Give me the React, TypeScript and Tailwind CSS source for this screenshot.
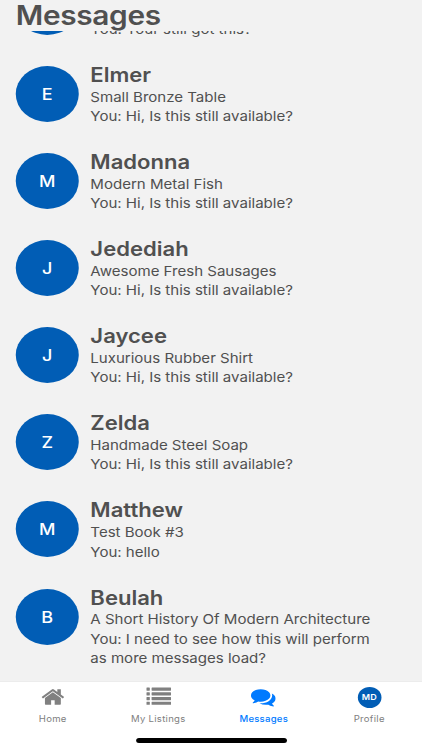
import React from 'react';

interface Conversation {
  name: string;
  listing: string;
  message: string;
}

const conversations: Conversation[] = [
  { name: 'Elmer', listing: 'Small Bronze Table', message: 'You: Hi, Is this still available?' },
  { name: 'Madonna', listing: 'Modern Metal Fish', message: 'You: Hi, Is this still available?' },
  { name: 'Jedediah', listing: 'Awesome Fresh Sausages', message: 'You: Hi, Is this still available?' },
  { name: 'Jaycee', listing: 'Luxurious Rubber Shirt', message: 'You: Hi, Is this still available?' },
  { name: 'Zelda', listing: 'Handmade Steel Soap', message: 'You: Hi, Is this still available?' },
  { name: 'Matthew', listing: 'Test Book #3', message: 'You: hello' },
  {
    name: 'Beulah',
    listing: 'A Short History Of Modern Architecture',
    message: 'You: I need to see how this will perform as more messages load?',
  },
];

function HomeIcon() {
  return (
    <svg className="w-[22px] h-[22px]" viewBox="0 0 1792 1792" fill="currentColor">
      <path d="M1472 992v480q0 26-19 45t-45 19h-384v-384h-256v384h-384q-26 0-45-19t-19-45v-480q0-1 .5-3t.5-3l575-474 575 474q1 2 1 6zm223-69l-62 74q-8 9-21 11h-3q-13 0-21-7l-692-577-692 577q-12 8-24 7-13-2-21-11l-62-74q-8-10-7-23.5t11-21.5l719-599q32-26 76-26t76 26l244 204v-195q0-14 9-23t23-9h192q14 0 23 9t9 23v408l219 182q10 8 11 21.5t-7 23.5z" />
    </svg>
  );
}

function ListIcon() {
  return (
    <svg className="w-[22px] h-[22px]" viewBox="0 0 1792 1792" fill="currentColor">
      {[128, 512, 896, 1280].map((y) => (
        <g key={y}>
          <rect x="0" y={y} width="256" height="256" rx="32" />
          <rect x="384" y={y} width="1408" height="256" rx="32" />
        </g>
      ))}
    </svg>
  );
}

function CommentsIcon() {
  return (
    <svg className="w-[22px] h-[22px]" viewBox="0 0 1792 1792" fill="currentColor">
      <path d="M1408 768q0 139-94 257t-256.5 186.5-353.5 68.5q-86 0-176-16-124 88-278 128-36 9-86 16h-3q-11 0-20.5-8t-11.5-21q-1-3-1-6.5t.5-6.5 2-6l2.5-5 3.5-5.5 4-5 4.5-5 4-4.5q5-6 23-25t26-29.5 22.5-29 25-38.5 20.5-44q-124-72-195-177t-71-224q0-139 94-257t256.5-186.5 353.5-68.5 353.5 68.5 256.5 186.5 94 257zm384 256q0 120-71 224.5t-195 176.5q10 24 20.5 44t25 38.5 22.5 29 26 29.5 23 25q1 1 4 4.5t4.5 5 4 5 3.5 5.5l2.5 5 2 6 .5 6.5-1 6.5q-3 14-13 22t-22 7q-50-7-86-16-154-40-278-128-90 16-176 16-271 0-472-132 58 4 88 4 161 0 309-45t264-129q125-92 192-212t67-254q0-77-23-152 129 71 204 178t75 230z" />
    </svg>
  );
}

function Avatar({ letter }: { letter?: string }) {
  return (
    <div className="w-14 h-14 shrink-0 rounded-full bg-[#015db5] text-white flex items-center justify-center text-base font-medium">
      {letter}
    </div>
  );
}

function Tab({ label, active, children }: { label: string; active?: boolean; children: React.ReactNode }) {
  return (
    <div className={`flex-1 flex flex-col items-center ${active ? 'text-[#007aff]' : 'text-[#808080]'}`}>
      <div className="h-[22px] flex items-center">{children}</div>
      <span className={`mt-[5px] text-[8.5px] leading-[12px] ${active ? 'font-medium tracking-[0.2px]' : 'font-normal tracking-[0.25px]'}`}>
        {label}
      </span>
    </div>
  );
}

export default function App() {
  return (
    <div className="w-[422px] h-[750px] overflow-hidden bg-[#f2f2f2]">
      <div
        className="w-[375px] h-[750px] origin-left scale-x-[1.1253] flex flex-col text-[#505050]"
        style={{ fontFamily: 'Inter, "Liberation Sans", sans-serif' }}
      >
        <h1 className="h-[31px] shrink-0 pl-[14px] text-[26.5px] leading-[31px] font-semibold tracking-[-0.3px]">Messages</h1>

        {/* Conversation list, scrolled part way */}
        <div className="flex-1 min-h-0 overflow-hidden flex flex-col px-[14px]">
          <div className="-mt-[52.4px] h-[87.15px] shrink-0 flex">
            <Avatar />
            <p className="ml-[10.5px] pt-[41.6px] text-[13.4px] leading-[19.2px]">You: Your still got this?</p>
          </div>
          {conversations.map((c) => (
            <div key={c.name} className="h-[87.15px] shrink-0 flex">
              <Avatar letter={c.name[0]} />
              <div className="-mt-[3px] ml-[10.3px] w-[262px]">
                <h2 className="text-[19.6px] leading-6 font-semibold">{c.name}</h2>
                <div className="pt-[0.9px] text-[13.4px] leading-[19.2px] tracking-[-0.02px]">
                  <p>{c.listing}</p>
                  <p>{c.message}</p>
                </div>
              </div>
            </div>
          ))}
        </div>

        {/* Tab bar */}
        <div className="h-[69px] shrink-0 bg-white border-t border-[#ececec] pt-[4px] flex flex-col">
          <div className="flex">
            <Tab label="Home"><HomeIcon /></Tab>
            <Tab label="My Listings"><ListIcon /></Tab>
            <Tab label="Messages" active><CommentsIcon /></Tab>
            <Tab label="Profile">
              <div className="w-[21px] h-[21px] rounded-full bg-[#015db5] text-white flex items-center justify-center text-[8px] font-semibold">
                MD
              </div>
            </Tab>
          </div>
          <div className="mt-auto mb-[7px] mx-auto w-[134px] h-[5px] rounded-full bg-black" />
        </div>
      </div>
    </div>
  );
}
